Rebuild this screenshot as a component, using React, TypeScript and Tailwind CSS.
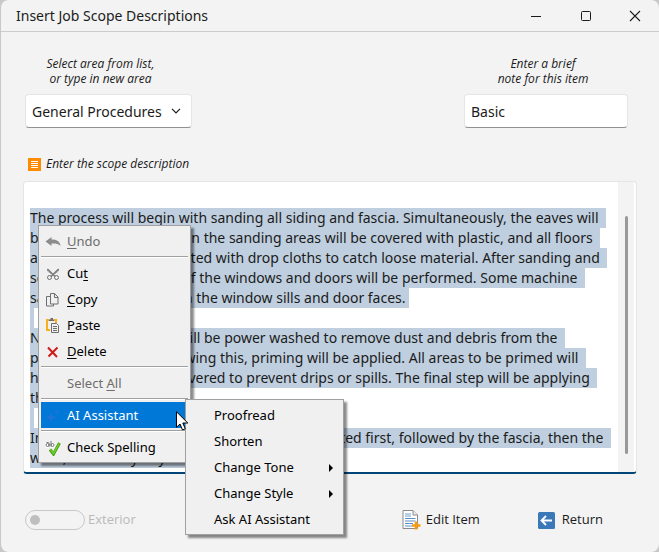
import React, { useEffect, useRef } from 'react';

const scopeText = `The process will begin with sanding all siding and fascia. Simultaneously, the eaves will be masked. All surfaces in the sanding areas will be covered with plastic, and all floors and patios will be protected with drop cloths to catch loose material. After sanding and setup, careful cleaning of the windows and doors will be performed. Some machine sanding may be done on the window sills and door faces.

Next, all exterior walls will be power washed to remove dust and debris from the property surfaces. Following this, priming will be applied. All areas to be primed will have the floors safely covered to prevent drips or spills. The final step will be applying the finish coats.

In most cases, the eaves and siding will be painted first, followed by the fascia, then the walls, and finally any trim.`;

const MinimizeIcon = () => (
  <svg width="10" height="10" viewBox="0 0 10 10" fill="none" stroke="currentColor" aria-hidden="true">
    <path d="M0 5.500h10" />
  </svg>
);

const MaximizeIcon = () => (
  <svg width="10" height="10" viewBox="0 0 10 10" fill="none" stroke="currentColor" aria-hidden="true">
    <rect x="0.500" y="0.500" width="9" height="9" rx="1" />
  </svg>
);

const CloseIcon = () => (
  <svg width="12" height="12" viewBox="0 0 12 12" fill="none" stroke="currentColor" aria-hidden="true">
    <path d="M1 1l10 10M11 1L1 11" strokeWidth="1.100" />
  </svg>
);

const UndoIcon = () => (
  <svg width="16" height="16" viewBox="0 0 16 16" aria-hidden="true">
    <path d="M0.500 7.500L6.500 3v2.500c5 0 8.500 1.500 9 6.500-2-2.200-4.500-2.700-9-2.600V12z" fill="#8c8c8c" />
  </svg>
);

const CutIcon = () => (
  <svg width="16" height="16" viewBox="0 0 16 16" fill="none" stroke="#6e6e6e" aria-hidden="true">
    <path d="M2.500 3l7.500 7.500M13.500 3L6 10.500" strokeWidth="1.100" />
    <circle cx="4.500" cy="11.500" r="2" />
    <circle cx="11.500" cy="11.500" r="2" />
    <path d="M2.500 3v2l4 3M13.500 3v2l-4 3" strokeWidth="0.600" />
  </svg>
);

const CopyIcon = () => (
  <svg width="16" height="16" viewBox="0 0 16 16" fill="none" stroke="#6e6e6e" aria-hidden="true">
    <path d="M5 4.500H1.500v9.500h7v-2" />
    <path d="M5.500 1.500h4l3.500 3.500v7H5.500z" fill="#f0f0f0" />
    <path d="M9.500 1.500v4H13" />
  </svg>
);

const PasteIcon = () => (
  <svg width="16" height="16" viewBox="0 0 16 16" fill="none" aria-hidden="true">
    <path d="M4 2H2v10h3M9 2h2v3" stroke="#f9ae1b" strokeWidth="2" />
    <path d="M4 3h5V1.500H8V0H5.500v1.500H4z" fill="#6e6e6e" />
    <path d="M6.500 5.500h5l2 2v7h-7z" fill="#f0f0f0" stroke="#6e6e6e" />
    <path d="M8 8.500h4M8 10.500h4M8 12.500h4" stroke="#6e6e6e" />
  </svg>
);

const DeleteIcon = () => (
  <svg width="16" height="16" viewBox="0 0 16 16" fill="none" stroke="#d11a1a" strokeWidth="2" aria-hidden="true">
    <path d="M3 3.500l9 9.500M12.500 3.500L3.500 12.500" />
  </svg>
);

const SparkleIcon = () => (
  <svg width="16" height="16" viewBox="0 0 16 16" fill="#1f74d8" aria-hidden="true">
    <path d="M6 4l1.500 4L12 9.500 7.500 11 6 15 4.500 11 0.500 9.500 4.500 8z" />
    <path d="M12.500 1l0.800 2 2.200 0.800-2.200 0.800-0.800 2-0.800-2-2-0.800 2-0.800z" />
  </svg>
);

const SpellIcon = () => (
  <svg width="16" height="16" viewBox="0 0 16 16" fill="none" aria-hidden="true">
    <path d="M5 9.500l3.500 4.500L14.500 3" stroke="#3f9b12" strokeWidth="3" />
    <path d="M5.300 9.500l3.200 4L14.300 3.300" stroke="#73cc2c" strokeWidth="1.600" />
    <g stroke="#fff" strokeWidth="2.600">
      <circle cx="2.500" cy="5" r="1.500" />
      <circle cx="7.500" cy="5" r="1.500" />
    </g>
    <g stroke="#666" strokeWidth="0.900">
      <circle cx="2.500" cy="5" r="1.500" />
      <path d="M1.500 2.500h2l0.700 0.700v3.500M6 1v5.500" />
      <circle cx="7.500" cy="5" r="1.500" />
    </g>
  </svg>
);

const EditItemIcon = () => (
  <svg width="19" height="20" viewBox="0 0 19 20" fill="none" aria-hidden="true">
    <path d="M1 0.500h10l4.500 4.500v13.500H1z" fill="#fff" stroke="#8a8a8a" />
    <path d="M11 0.500V5h4.500" fill="#eee" stroke="#8a8a8a" />
    <rect x="3" y="3" width="6" height="4" fill="#b7d0e8" />
    <path d="M3 8.500h10.500M3 11h10.500M3 13.500h8M3 16h7" stroke="#5b8fc4" />
    <path d="M14 11.500v8M10 15.500h8.500" stroke="#f59b14" strokeWidth="2.600" />
  </svg>
);

const ReturnIcon = () => (
  <svg width="17" height="17" viewBox="0 0 17 17" fill="none" aria-hidden="true">
    <rect width="17" height="17" rx="1.500" fill="#3b78b8" />
    <path d="M14 8.500H4M8 4L3.500 8.500 8 13" stroke="#fff" strokeWidth="1.800" />
  </svg>
);

const DescriptionIcon = () => (
  <svg width="13" height="13" viewBox="0 0 13 13" aria-hidden="true">
    <rect width="13" height="13" fill="#ff8c00" />
    <path d="M3 3.500h7M3 5.500h7M3 7.500h7M3 9.500h7" stroke="#fff" />
  </svg>
);

type Item = {
  label: React.ReactNode;
  icon?: React.ReactNode;
  disabled?: boolean;
  active?: boolean;
  separated?: boolean;
};

const menuItems: Item[] = [
  { label: <><u>U</u>ndo</>, icon: <UndoIcon />, disabled: true },
  { label: <>Cu<u>t</u></>, icon: <CutIcon />, separated: true },
  { label: <><u>C</u>opy</>, icon: <CopyIcon /> },
  { label: <><u>P</u>aste</>, icon: <PasteIcon /> },
  { label: <><u>D</u>elete</>, icon: <DeleteIcon /> },
  { label: <>Select <u>A</u>ll</>, disabled: true, separated: true },
  { label: 'AI Assistant', icon: <SparkleIcon />, active: true, separated: true },
  { label: 'Check Spelling', icon: <SpellIcon />, separated: true },
];

const assistantItems = [
  { label: 'Proofread' },
  { label: 'Shorten' },
  { label: 'Change Tone', more: true },
  { label: 'Change Style', more: true },
  { label: 'Ask AI Assistant' },
];

const ContextMenu: React.FC = () => (
  <div
    role="menu"
    className="absolute top-11 left-[15px] w-[153px] border border-[#a0a0a0] bg-[#f0f0f0] p-0.5 text-[13px] text-black shadow-[3px_3px_2px_rgba(0,0,0,0.45)]"
  >
    {menuItems.map((item, i) => (
      <React.Fragment key={i}>
        {item.separated && (
          <div role="separator" className="flex h-1.5 items-center">
            <div className="h-0.5 w-full border-t border-b border-t-[#a0a0a0] border-b-white" />
          </div>
        )}
        <button
          type="button"
          role="menuitem"
          disabled={item.disabled}
          className={`flex h-[26px] w-full items-center gap-1.5 pt-0.5 pl-1 text-left underline-offset-2 ${
            item.active ? 'bg-[#0078d7] text-white' : item.disabled ? 'text-[#6d6d6d]' : ''
          }`}
        >
          <span className="w-4">{item.icon}</span>
          <span>{item.label}</span>
        </button>
      </React.Fragment>
    ))}
  </div>
);

const AssistantMenu: React.FC = () => (
  <div
    role="menu"
    className="absolute top-[218px] left-[162px] w-[159px] border border-[#a0a0a0] bg-[#f0f0f0] p-0.5 text-[13px] text-black shadow-[3px_3px_2px_rgba(0,0,0,0.45)]"
  >
    {assistantItems.map((item) => (
      <button
        key={item.label}
        type="button"
        role="menuitem"
        className="flex h-[26px] w-full items-center justify-between pt-0.5 pr-2 pl-[26px] text-left"
      >
        {item.label}
        {item.more && (
          <svg width="4" height="8" viewBox="0 0 4 8" aria-hidden="true">
            <path d="M0 0l4 4-4 4z" />
          </svg>
        )}
      </button>
    ))}
  </div>
);

const Pointer = () => (
  <svg className="absolute top-[230px] left-[153px]" width="13" height="20" viewBox="0 0 13 20" aria-hidden="true">
    <path d="M0.500 0.800v15.500l3.500-3.300 2.500 6 2.800-1.200L6.800 12h5z" fill="#fff" stroke="#000" />
  </svg>
);

const App: React.FC = () => {
  const editor = useRef<HTMLTextAreaElement>(null);

  useEffect(() => {
    editor.current?.focus({ preventScroll: true });
    editor.current?.select();
  }, []);

  return (
    <div className="bg-[#c8c8c8] font-['Noto_Sans','Open_Sans',sans-serif] text-[#1b1b1b]">
      <div className="flex min-h-screen flex-col rounded-lg border-l border-[#c8c8c8] bg-[#f3f3f3]">
        <header className="flex h-8 items-stretch justify-between border-b border-[#cccccc] pl-[15px]">
          <h1 className="self-center text-[14px]">Insert Job Scope Descriptions</h1>
          <div className="flex">
            <button type="button" aria-label="Minimize" className="flex w-[50px] items-center justify-center">
              <MinimizeIcon />
            </button>
            <button type="button" aria-label="Maximize" className="flex w-[50px] items-center justify-center">
              <MaximizeIcon />
            </button>
            <button type="button" aria-label="Close" className="flex w-12 items-center justify-center">
              <CloseIcon />
            </button>
          </div>
        </header>

        <main className="px-[22px]">
          <div className="flex justify-between pt-6 pr-[9px] pl-0.5">
            <div className="flex w-[167px] flex-col gap-2">
              <label htmlFor="area" className="pr-4 text-center font-['Open_Sans',sans-serif] text-[12px] leading-[15px] italic">
                Select area from list,
                <br />
                or type in new area
              </label>
              <div className="relative">
                <select
                  id="area"
                  className="h-[34px] w-full appearance-none rounded border border-[#e5e5e5] border-b-[#919191] bg-white pl-1.5 text-[14px]"
                >
                  <option>General Procedures</option>
                </select>
                <svg
                  className="pointer-events-none absolute top-3.5 right-[11px]"
                  width="10"
                  height="6"
                  viewBox="0 0 10 6"
                  fill="none"
                  stroke="currentColor"
                  aria-hidden="true"
                >
                  <path d="M1 0.800l4 4 4-4" strokeWidth="1.200" />
                </svg>
              </div>
            </div>
            <div className="flex w-[164px] flex-col gap-2">
              <label htmlFor="note" className="pr-1.5 text-center font-['Open_Sans',sans-serif] text-[12px] leading-[15px] italic">
                Enter a brief
                <br />
                note for this item
              </label>
              <input
                id="note"
                defaultValue="Basic"
                className="h-[34px] w-full rounded border border-[#e5e5e5] border-b-[#919191] bg-white px-1.5 text-[14px]"
              />
            </div>
          </div>

          <div className="flex items-center gap-[5px] pt-[27px] pb-2 pl-[5px]">
            <DescriptionIcon />
            <label htmlFor="scope" className="font-['Open_Sans',sans-serif] text-[12px] leading-[18px] italic">
              Enter the scope description
            </label>
          </div>

          <div className="relative">
            <div className="flex overflow-hidden rounded border border-b-2 border-[#e5e5e5] border-b-[#004578] bg-white">
              <textarea
                id="scope"
                ref={editor}
                defaultValue={scopeText}
                className="block h-[290px] grow resize-none overflow-hidden pt-[26px] pr-2 pl-1.5 text-[14px] leading-5 whitespace-pre-line outline-none selection:bg-[#bfcfdf] selection:text-[#1b1b1b]"
              />
              <div className="mr-0.5 flex w-4 justify-center bg-[#f3f3f3] pt-[34px] pb-[18px]">
                <div className="w-[3px] rounded-full bg-[#999999]" />
              </div>
            </div>
            <ContextMenu />
            <AssistantMenu />
            <Pointer />
          </div>

          <footer className="flex items-center justify-between pt-9 pr-[34px] pl-0.5">
            <label className="flex items-center gap-[3px] font-['Open_Sans',sans-serif] text-[13px] text-[#b9b9b9]">
              <input
                type="checkbox"
                role="switch"
                disabled
                className="flex h-5 w-[60px] appearance-none items-center rounded-full border border-[#c8c8c8] pl-1 before:size-2.5 before:rounded-full before:bg-[#bfbfbf] before:content-['']"
              />
              Exterior
            </label>
            <div className="flex gap-[58px] font-['Open_Sans',sans-serif] text-[13px]">
              <button type="button" className="flex items-center gap-[5px]">
                <EditItemIcon />
                Edit Item
              </button>
              <button type="button" className="flex items-center gap-[7px]">
                <ReturnIcon />
                Return
              </button>
            </div>
          </footer>
        </main>
      </div>
    </div>
  );
};

export default App;
